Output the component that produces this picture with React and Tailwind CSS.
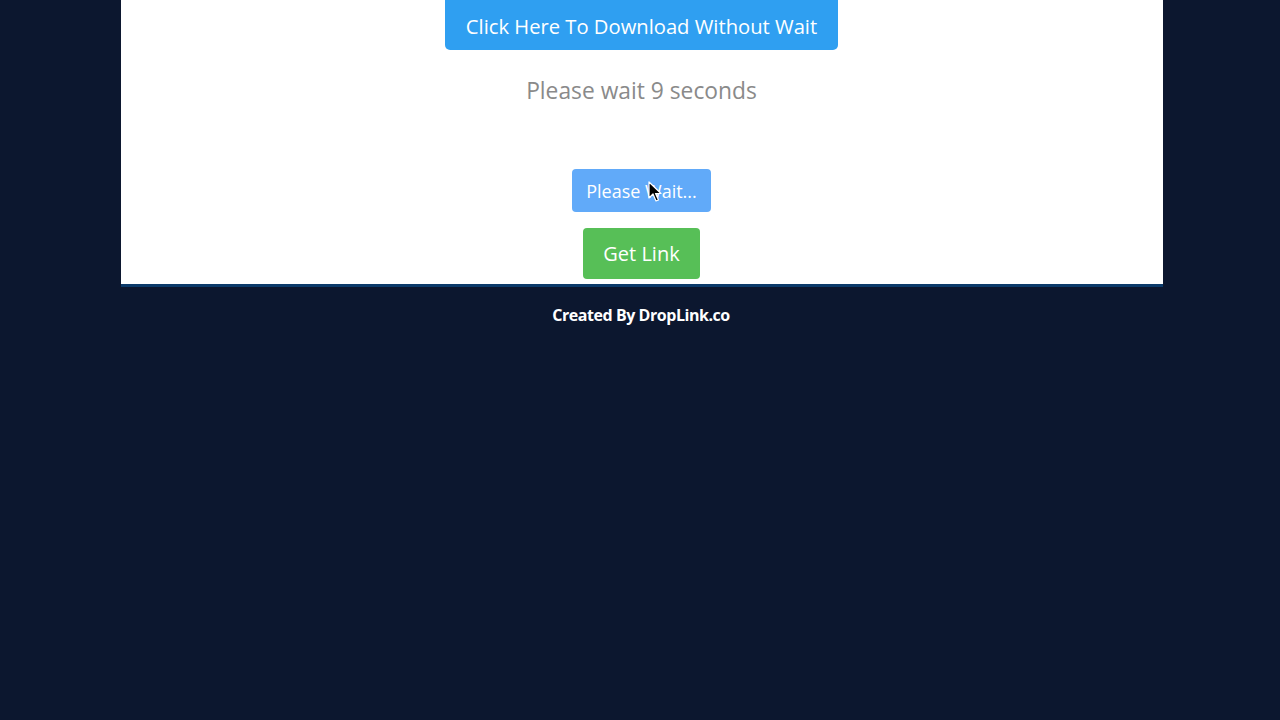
export default function App() {
  return (
    <div className="min-h-screen w-full bg-[#0c172f] font-['Open_Sans',sans-serif] relative">
      <div className="ml-[121px] w-[1042px] bg-white border-b-[3px] border-[#0b3a6a] h-[287px] flex flex-col items-center pr-[1px]">
        <button
          type="button"
          className="h-[50px] w-[393px] rounded-b-[5px] bg-[#2f9ff1] text-white text-[20.2px] leading-none flex items-center justify-center pt-[3px]"
        >
          Click Here To Download Without Wait
        </button>
        <p className="mt-[26px] text-[22.8px] leading-[30px] text-[#8a8a8a]">Please wait 9 seconds</p>
        <button
          type="button"
          className="mt-[63px] h-[43px] w-[139px] rounded-[4px] bg-[#61aaf9] text-white text-[18px] leading-none flex items-center justify-center"
        >
          Please Wait...
        </button>
        <button
          type="button"
          className="mt-[16px] h-[51px] w-[117px] rounded-[4px] bg-[#57bf57] text-white text-[20px] leading-none flex items-center justify-center"
        >
          Get Link
        </button>
      </div>
      <p className="mt-[17px] ml-[2px] text-center text-white font-bold text-[16px] leading-[22px] tracking-[-0.45px]">
        Created By DropLink.co
      </p>
      <svg
        className="absolute left-[648px] top-[181px]"
        width="14"
        height="22"
        viewBox="0 0 14 22"
      >
        <path d="M1 1 L1 17 L5 13 L8 20 L10.5 19 L7.5 12.5 L13 12.5 Z" fill="#000" stroke="#fff" strokeWidth="1.2" strokeLinejoin="round" />
      </svg>
    </div>
  );
}
